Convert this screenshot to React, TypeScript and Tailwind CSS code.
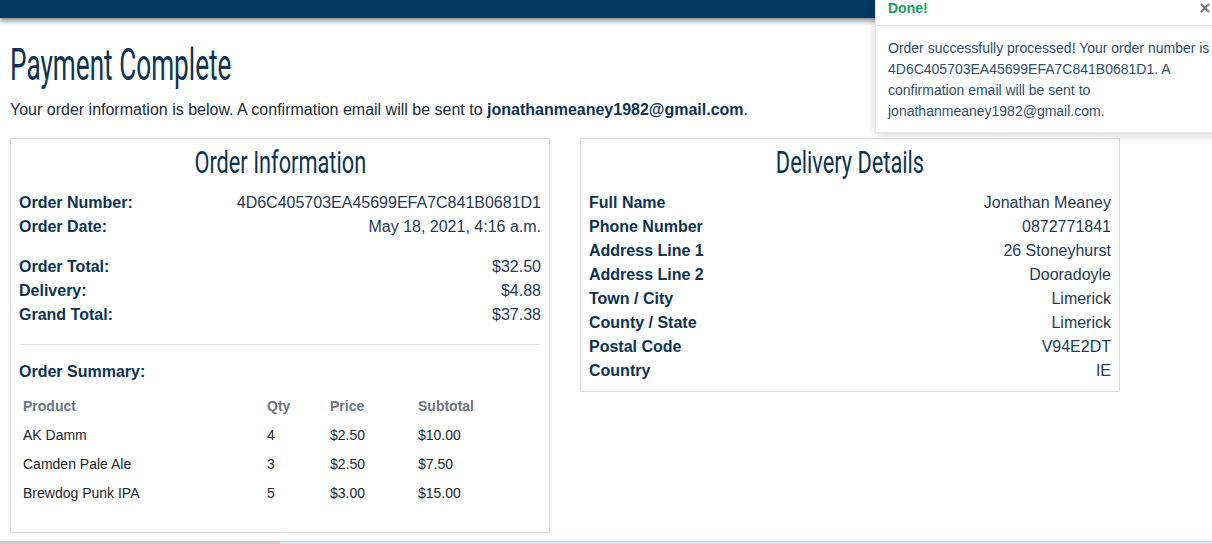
import { X } from "lucide-react";

const NAVY = "text-[#0c3354]";

const orderRows = [
    { label: "Order Number:", value: "4D6C405703EA45699EFA7C841B0681D1" },
    { label: "Order Date:", value: "May 18, 2021, 4:16 a.m." },
];

const totalRows = [
    { label: "Order Total:", value: "$32.50" },
    { label: "Delivery:", value: "$4.88" },
    { label: "Grand Total:", value: "$37.38" },
];

const items = [
    { product: "AK Damm", qty: 4, price: "$2.50", subtotal: "$10.00" },
    { product: "Camden Pale Ale", qty: 3, price: "$2.50", subtotal: "$7.50" },
    { product: "Brewdog Punk IPA", qty: 5, price: "$3.00", subtotal: "$15.00" },
];

const delivery = [
    { label: "Full Name", value: "Jonathan Meaney" },
    { label: "Phone Number", value: "0872771841" },
    { label: "Address Line 1", value: "26 Stoneyhurst" },
    { label: "Address Line 2", value: "Dooradoyle" },
    { label: "Town / City", value: "Limerick" },
    { label: "County / State", value: "Limerick" },
    { label: "Postal Code", value: "V94E2DT" },
    { label: "Country", value: "IE" },
];

// no condensed display face installed, so squeeze Roboto horizontally
const heading = "font-['Roboto',sans-serif] font-normal text-[#0c3354] inline-block";

function Row({ label, value }: { label: string; value: string }) {
    return (
        <div className="flex justify-between leading-[24px] text-[16px]">
            <span className={`font-bold ${NAVY}`}>{label}</span>
            <span className="text-[#1f3a52]">{value}</span>
        </div>
    );
}

function CardTitle({ children }: { children: string }) {
    return (
        <div className="text-center mt-[3px] mb-[9px] h-[40px]">
            <h2 className={`${heading} text-[32px] leading-[40px] scale-x-[0.68] origin-center`}>{children}</h2>
        </div>
    );
}

export default function App() {
    return (
        <div className="relative w-[1212px] h-[544px] overflow-hidden bg-white font-['Liberation_Sans',Arial,sans-serif]">
            {/* navbar */}
            <div className="h-[18px] bg-[#033963] shadow-[0_3px_5px_rgba(0,0,0,0.45)]" />

            <div className="pl-[10px]">
                <div className="mt-[22px] h-[50px]">
                    <h1 className={`${heading} text-[44px] leading-[50px] scale-x-[0.595] origin-left`}>
                        Payment Complete
                    </h1>
                </div>
                <p className="text-[16px] leading-[24px] text-[#1b2a38] mt-[8px]">
                    Your order information is below. A confirmation email will be sent to{" "}
                    <strong className={NAVY}>jonathanmeaney1982@gmail.com</strong>.
                </p>

                <div className="flex items-start gap-[30px] mt-[16px]">
                    {/* order information */}
                    <div className="w-[540px] border border-[#dedede] px-[8px] pb-[24px]">
                        <CardTitle>Order Information</CardTitle>
                        {orderRows.map((r) => (
                            <Row key={r.label} {...r} />
                        ))}
                        <div className="mt-[16px]">
                            {totalRows.map((r) => (
                                <Row key={r.label} {...r} />
                            ))}
                        </div>
                        <hr className="mt-[17px] border-t border-[#e3e3e3]" />
                        <h3 className={`mt-[15px] text-[16px] leading-[24px] font-bold ${NAVY}`}>Order Summary:</h3>
                        <div className="mt-[8px] text-[14px]">
                            <div className="grid grid-cols-[244px_63px_88px_1fr] px-[4px] leading-[29px] font-bold text-[#6c757d]">
                                <span>Product</span>
                                <span>Qty</span>
                                <span>Price</span>
                                <span>Subtotal</span>
                            </div>
                            {items.map((it) => (
                                <div
                                    key={it.product}
                                    className="grid grid-cols-[244px_63px_88px_1fr] px-[4px] leading-[29px] text-[#212529]"
                                >
                                    <span>{it.product}</span>
                                    <span>{it.qty}</span>
                                    <span>{it.price}</span>
                                    <span>{it.subtotal}</span>
                                </div>
                            ))}
                        </div>
                    </div>

                    {/* delivery details */}
                    <div className="w-[540px] border border-[#dedede] px-[8px] pb-[8px]">
                        <CardTitle>Delivery Details</CardTitle>
                        {delivery.map((r) => (
                            <Row key={r.label} {...r} />
                        ))}
                    </div>
                </div>
            </div>

            {/* footer edge */}
            <div className="flex h-[3px] mt-[8px]">
                <div className="w-[280px] bg-[#cccccc]" />
                <div className="flex-1 bg-[#d3e3ec]" />
            </div>

            {/* toast */}
            <div className="absolute left-[875px] top-[-10px] w-[350px] bg-white shadow-[0_2px_10px_rgba(0,0,0,0.18)] border border-[#e8e8e8]">
                <div className="flex items-center justify-between h-[35px] px-[12px] border-b border-[#e6e6e6]">
                    <strong className="text-[14px] text-[#16a05c]">Done!</strong>
                    <X className="w-[14px] h-[14px] text-[#777]" strokeWidth={3.5} />
                </div>
                <div className="px-[12px] pt-[12px] pb-[10px] text-[14px] leading-[21px] text-[#2f4f6b]">
                    Order successfully processed! Your order number is 4D6C405703EA45699EFA7C841B0681D1. A confirmation
                    email will be sent to jonathanmeaney1982@gmail.com.
                </div>
            </div>
        </div>
    );
}
